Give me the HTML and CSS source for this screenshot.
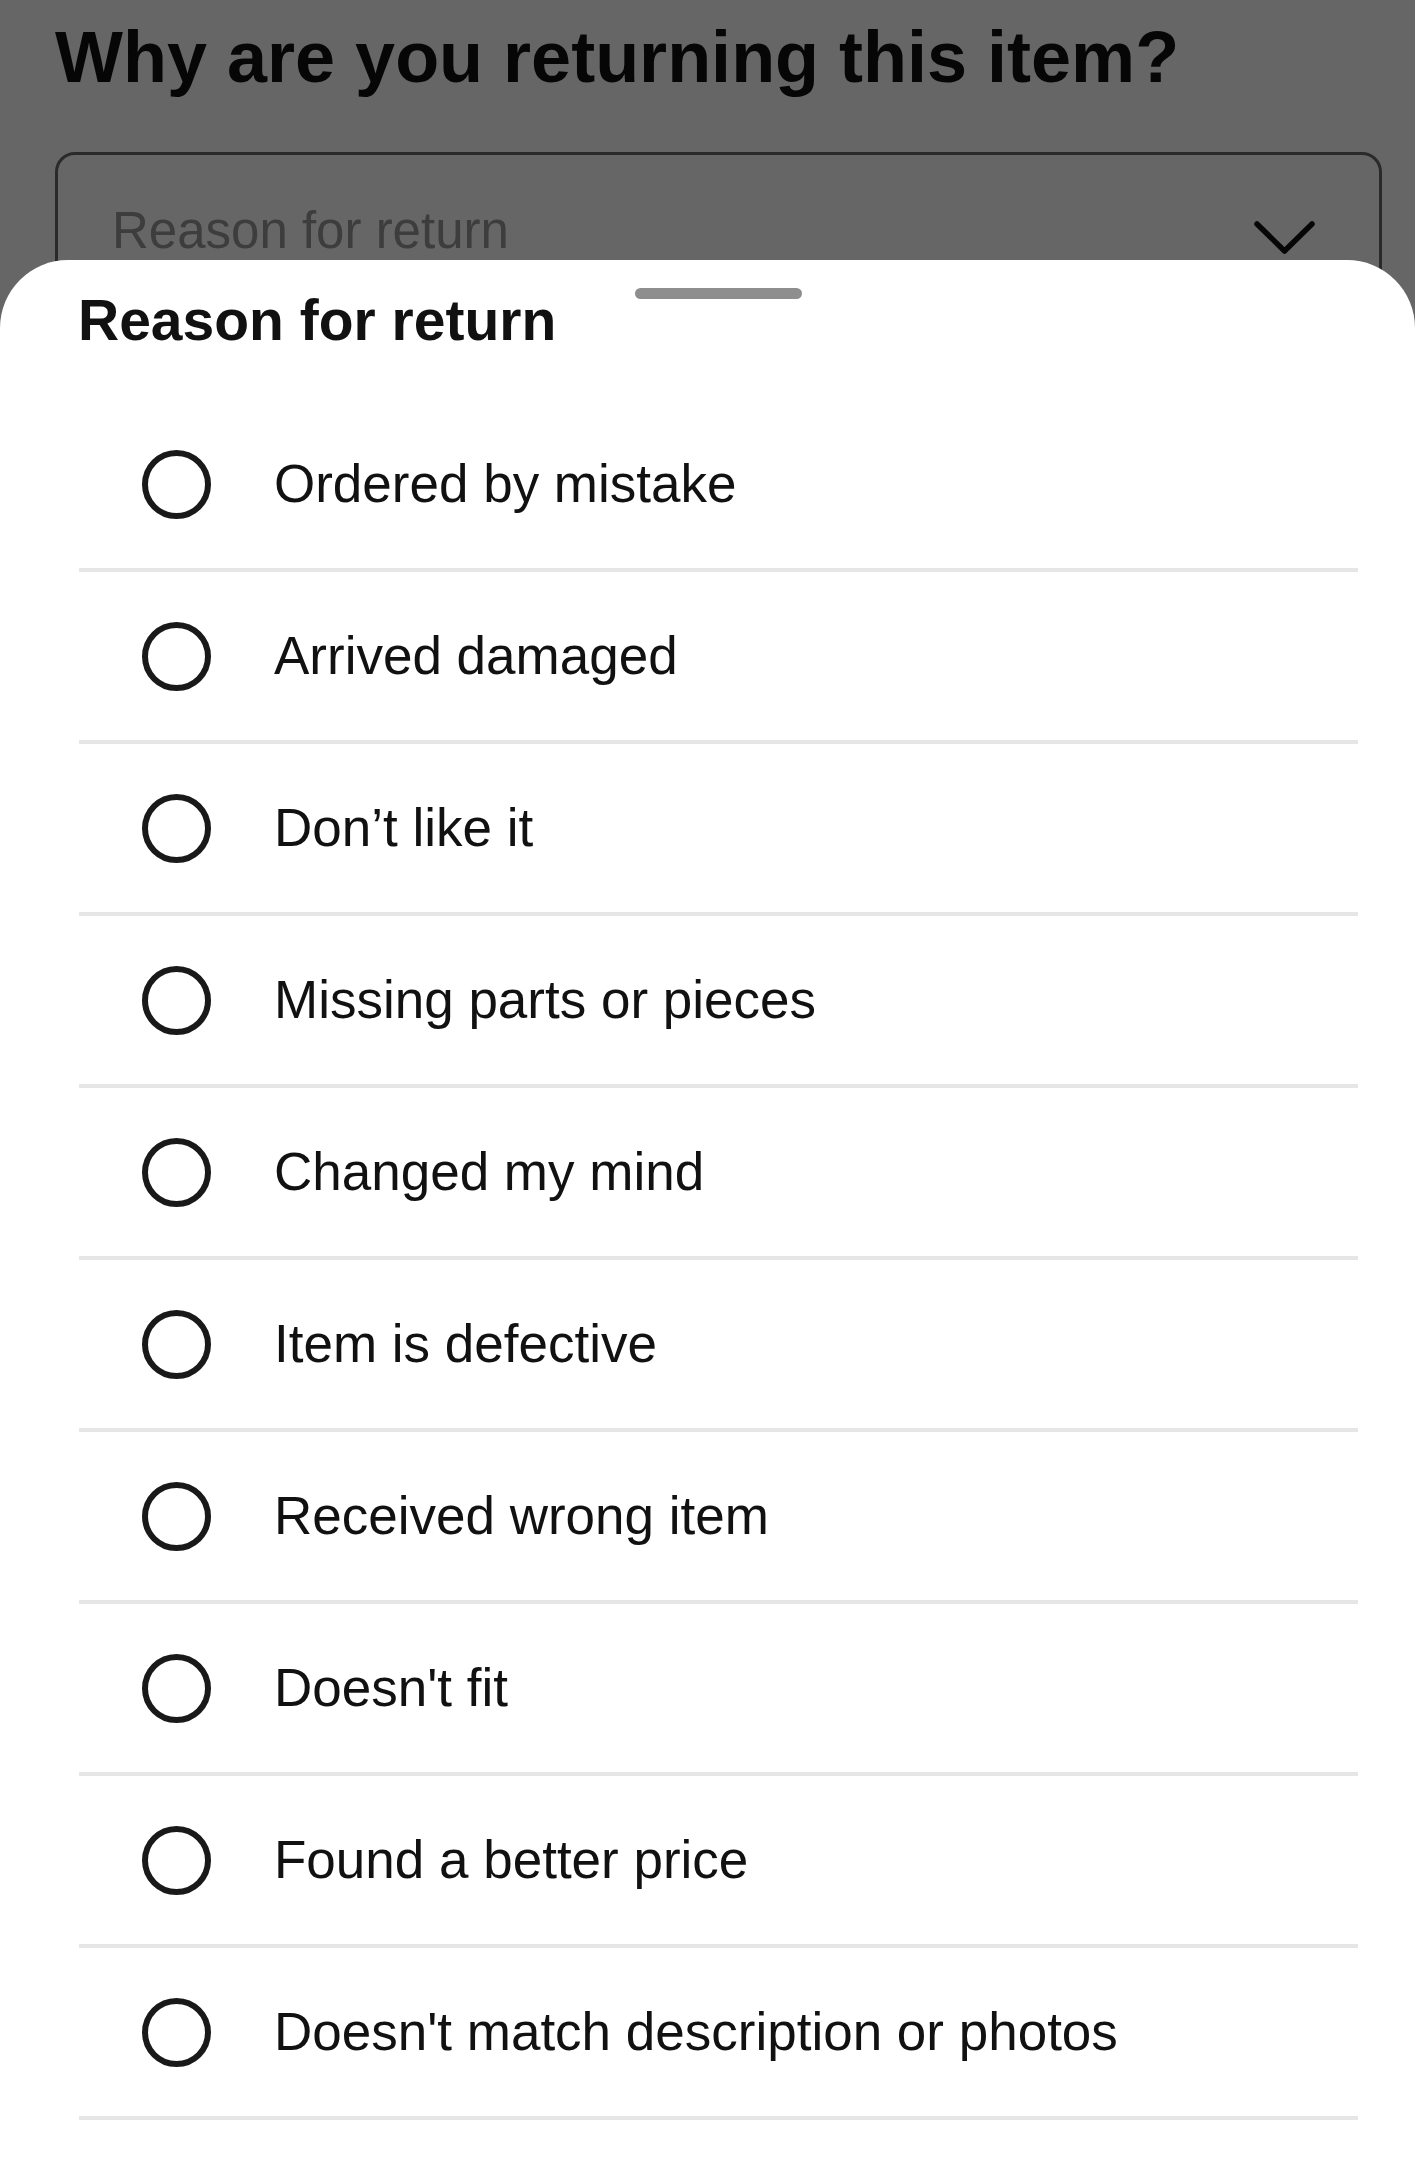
FILE: index.html
```html
<!DOCTYPE html>
<html lang="en">
<head>
<meta charset="utf-8">
<title>Reason for return</title>
<link rel="stylesheet" href="styles.css">
</head>
<body>
<main class="page">
  <h1 class="page-title">Why are you returning this item?</h1>
  <div class="select">
    <span class="select-placeholder">Reason for return</span>
    <svg class="select-chevron" width="70" height="42" viewBox="0 0 70 42" aria-hidden="true">
      <path d="M7 8 L34.5 35 L62 8" fill="none" stroke="#111" stroke-width="5.5" stroke-linecap="round" stroke-linejoin="round"/>
    </svg>
  </div>
</main>
<div class="overlay"></div>
<section class="sheet">
  <div class="sheet-handle"></div>
  <h2 class="sheet-title">Reason for return</h2>
  <ul class="options">
    <li class="option"><span class="radio"></span><span class="option-label">Ordered by mistake</span></li>
    <li class="option"><span class="radio"></span><span class="option-label">Arrived damaged</span></li>
    <li class="option"><span class="radio"></span><span class="option-label">Don’t like it</span></li>
    <li class="option"><span class="radio"></span><span class="option-label">Missing parts or pieces</span></li>
    <li class="option"><span class="radio"></span><span class="option-label">Changed my mind</span></li>
    <li class="option"><span class="radio"></span><span class="option-label">Item is defective</span></li>
    <li class="option"><span class="radio"></span><span class="option-label">Received wrong item</span></li>
    <li class="option"><span class="radio"></span><span class="option-label">Doesn't fit</span></li>
    <li class="option"><span class="radio"></span><span class="option-label">Found a better price</span></li>
    <li class="option"><span class="radio"></span><span class="option-label">Doesn't match description or photos</span></li>
  </ul>
</section>
</body>
</html>
```
FILE: styles.css
```css
* { box-sizing: border-box; }

html, body {
  margin: 0;
  padding: 0;
}

body {
  width: 1415px;
  height: 2158px;
  overflow: hidden;
  position: relative;
  background: #ffffff;
  font-family: "Liberation Sans", Arial, sans-serif;
  color: #111111;
}

.page {
  padding: 21px 33px 0 55px;
}

.page-title {
  margin: 0;
  font-size: 72px;
  line-height: 72px;
  font-weight: 700;
  color: #111111;
  letter-spacing: 0;
}

.select {
  margin-top: 59px;
  height: 160px;
  border: 3px solid #6a6a6a;
  border-radius: 20px;
  display: flex;
  justify-content: space-between;
  align-items: flex-start;
  padding: 50px 59px 0 54px;
}

.select-placeholder {
  font-size: 51px;
  line-height: 51px;
  color: #989898;
}

.select-chevron {
  display: block;
  margin-top: 11px;
}

.overlay {
  position: absolute;
  inset: 0;
  background: rgba(0, 0, 0, 0.6);
}

.sheet {
  position: absolute;
  top: 260px;
  left: 0;
  right: 0;
  bottom: 0;
  background: #ffffff;
  border-radius: 68px 68px 0 0;
  padding: 32px 57px 0 79px;
}

.sheet-handle {
  position: absolute;
  top: 28px;
  left: 635px;
  width: 167px;
  height: 11px;
  border-radius: 6px;
  background: #8e8e8e;
}

.sheet-title {
  margin: 0 0 0 -1px;
  font-size: 57px;
  line-height: 57px;
  font-weight: 700;
  color: #111111;
}

.options {
  list-style: none;
  margin: 51px 0 0 0;
  padding: 0;
}

.option {
  height: 172px;
  border-bottom: 4px solid #e6e6e6;
  display: flex;
  align-items: center;
  padding-left: 63px;
}

.radio {
  flex: none;
  width: 69px;
  height: 69px;
  border: 6px solid #191919;
  border-radius: 50%;
}

.option-label {
  margin-left: 63px;
  font-size: 53px;
  line-height: 60px;
  color: #111111;
}
```
